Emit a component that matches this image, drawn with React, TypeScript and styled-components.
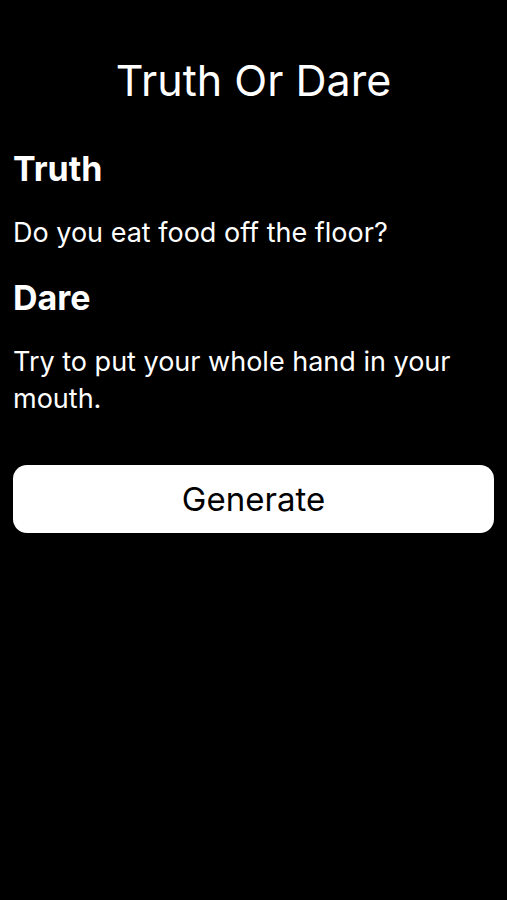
import { useState } from "react";
import styled, { createGlobalStyle } from "styled-components";

const GlobalStyle = createGlobalStyle`
	html, body {
		margin: 0;
		padding: 0;
		background-color: #000;
	}
	body {
		font-family: Inter, "Noto Sans", "Liberation Sans", sans-serif;
		color: #fff;
	}
`;

const Screen = styled.div`
	min-height: 900px;
	background-color: #000;
	display: flex;
	flex-direction: column;
	padding: 52px 13px 0 13px;
	box-sizing: border-box;
`;

const Title = styled.h1`
	margin: 0;
	font-size: 43px;
	font-weight: 400;
	line-height: 56px;
	text-align: center;
`;

const Section = styled.section`
	display: flex;
	flex-direction: column;
	gap: 26px;
	margin-top: 41px;

	& + & {
		margin-top: 27px;
	}
`;

const Heading = styled.h2`
	margin: 0;
	font-size: 34px;
	font-weight: 700;
	line-height: 39px;
`;

const Prompt = styled.p`
	margin: 0;
	font-size: 27px;
	line-height: 37px;
`;

const GenerateButton = styled.button`
	margin-top: 48px;
	height: 68px;
	width: 100%;
	border: none;
	border-radius: 14px;
	background-color: #fff;
	color: #000;
	font-family: inherit;
	font-size: 33px;
	cursor: pointer;
`;

const truths = [
	"Do you eat food off the floor?",
	"What is the most embarrassing thing you have ever done?",
	"Have you ever lied to get out of trouble?",
];

const dares = [
	"Try to put your whole hand in your mouth.",
	"Do ten push ups right now.",
	"Sing the chorus of your favourite song.",
];

export default function App() {
	const [index, setIndex] = useState(0);

	return (
		<>
			<GlobalStyle />
			<Screen>
				<Title>Truth Or Dare</Title>
				<Section>
					<Heading>Truth</Heading>
					<Prompt>{truths[index]}</Prompt>
				</Section>
				<Section>
					<Heading>Dare</Heading>
					<Prompt>{dares[index]}</Prompt>
				</Section>
				<GenerateButton
					onClick={() => setIndex((i) => (i + 1) % truths.length)}
				>
					Generate
				</GenerateButton>
			</Screen>
		</>
	);
}
